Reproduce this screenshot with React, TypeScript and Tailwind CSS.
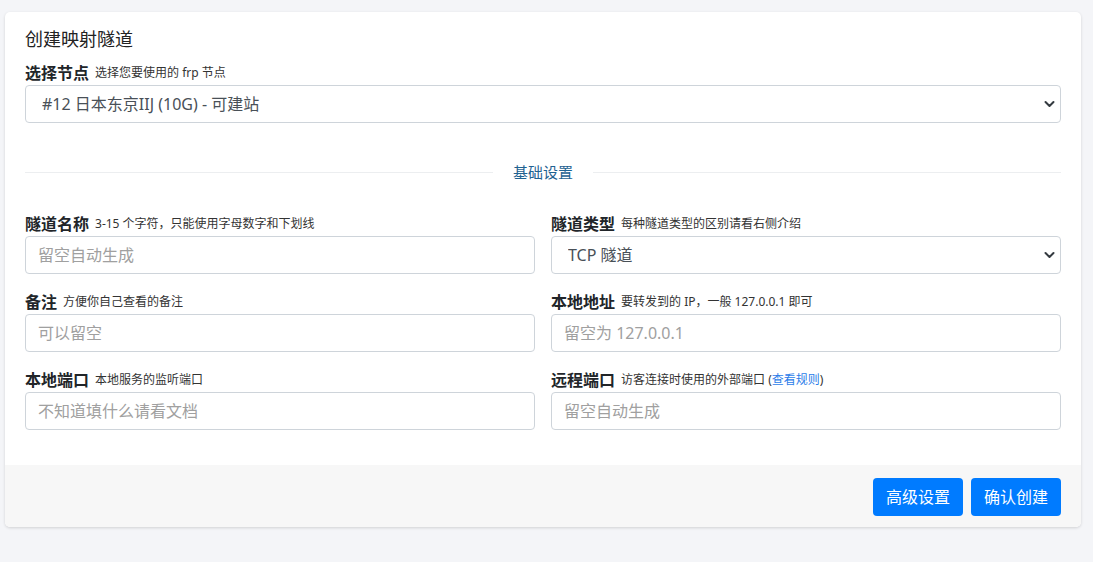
import type { ReactNode } from 'react';

const font = { fontFamily: '"Noto Sans", "Noto Sans CJK SC", sans-serif' };

function Chevron() {
  return (
    <svg className="pointer-events-none absolute right-[6px] top-1/2 -translate-y-1/2" width="11" height="8" viewBox="0 0 11 8">
      <path d="M1.5 2 L5.5 6 L9.5 2" fill="none" stroke="#343a40" strokeWidth="2" strokeLinecap="round" strokeLinejoin="round" />
    </svg>
  );
}

function Label({ title, hint }: { title: string; hint: ReactNode }) {
  return (
    <div className="flex h-6 items-center text-[#212529]">
      <span className="text-[16px] font-bold">{title}</span>
      <span className="ml-1.5 text-[12px] text-[#333]">{hint}</span>
    </div>
  );
}

function Input({ placeholder }: { placeholder: string }) {
  return (
    <input
      className="h-[38px] w-full rounded border border-[#ced4da] bg-white px-3 text-[16px] text-[#495057] outline-none placeholder:text-[#a0a0a0]"
      placeholder={placeholder}
      style={font}
    />
  );
}

function Select({ value }: { value: string }) {
  return (
    <div className="relative">
      <select
        className="h-[38px] w-full appearance-none rounded border border-[#ced4da] bg-white px-4 text-[16px] text-[#495057] outline-none"
        defaultValue={value}
        style={font}
      >
        <option>{value}</option>
      </select>
      <Chevron />
    </div>
  );
}

export default function App() {
  return (
    <div className="min-h-screen bg-[#f4f5f8] pl-[5px] pr-3 pt-3" style={font}>
      <div className="overflow-hidden rounded-[5px] bg-white shadow-[0_1px_3px_rgba(0,0,0,0.15)]">
        <div className="px-5 pb-[35px] pt-4">
          <h2 className="text-[18px] leading-[22px] text-[#222]">创建映射隧道</h2>
          <div className="mt-[11px]">
            <Label title="选择节点" hint="选择您要使用的 frp 节点" />
            <Select value="#12 日本东京IIJ (10G) - 可建站" />
          </div>

          <div className="mt-[37px] flex h-6 items-center gap-4">
            <div className="h-px flex-1 bg-[#eceef0]" />
            <span className="px-1 text-[15px] text-[#1f6291]">基础设置</span>
            <div className="h-px flex-1 bg-[#eceef0]" />
          </div>

          <div className="mt-[28px] grid grid-cols-2 gap-x-4 gap-y-4">
            <div>
              <Label title="隧道名称" hint="3-15 个字符，只能使用字母数字和下划线" />
              <Input placeholder="留空自动生成" />
            </div>
            <div>
              <Label title="隧道类型" hint="每种隧道类型的区别请看右侧介绍" />
              <Select value="TCP 隧道" />
            </div>
            <div>
              <Label title="备注" hint="方便你自己查看的备注" />
              <Input placeholder="可以留空" />
            </div>
            <div>
              <Label title="本地地址" hint="要转发到的 IP，一般 127.0.0.1 即可" />
              <Input placeholder="留空为 127.0.0.1" />
            </div>
            <div>
              <Label title="本地端口" hint="本地服务的监听端口" />
              <Input placeholder="不知道填什么请看文档" />
            </div>
            <div>
              <Label
                title="远程端口"
                hint={
                  <>
                    访客连接时使用的外部端口 (<span className="text-[#2b7de9]">查看规则</span>)
                  </>
                }
              />
              <Input placeholder="留空自动生成" />
            </div>
          </div>
        </div>

        <div className="flex justify-end gap-2 bg-[#f7f7f7] px-5 pb-[11px] pt-[13px]">
          <button className="h-[38px] w-[90px] rounded bg-[#007bff] text-[16px] text-white">高级设置</button>
          <button className="h-[38px] w-[90px] rounded bg-[#007bff] text-[16px] text-white">确认创建</button>
        </div>
      </div>
    </div>
  );
}
